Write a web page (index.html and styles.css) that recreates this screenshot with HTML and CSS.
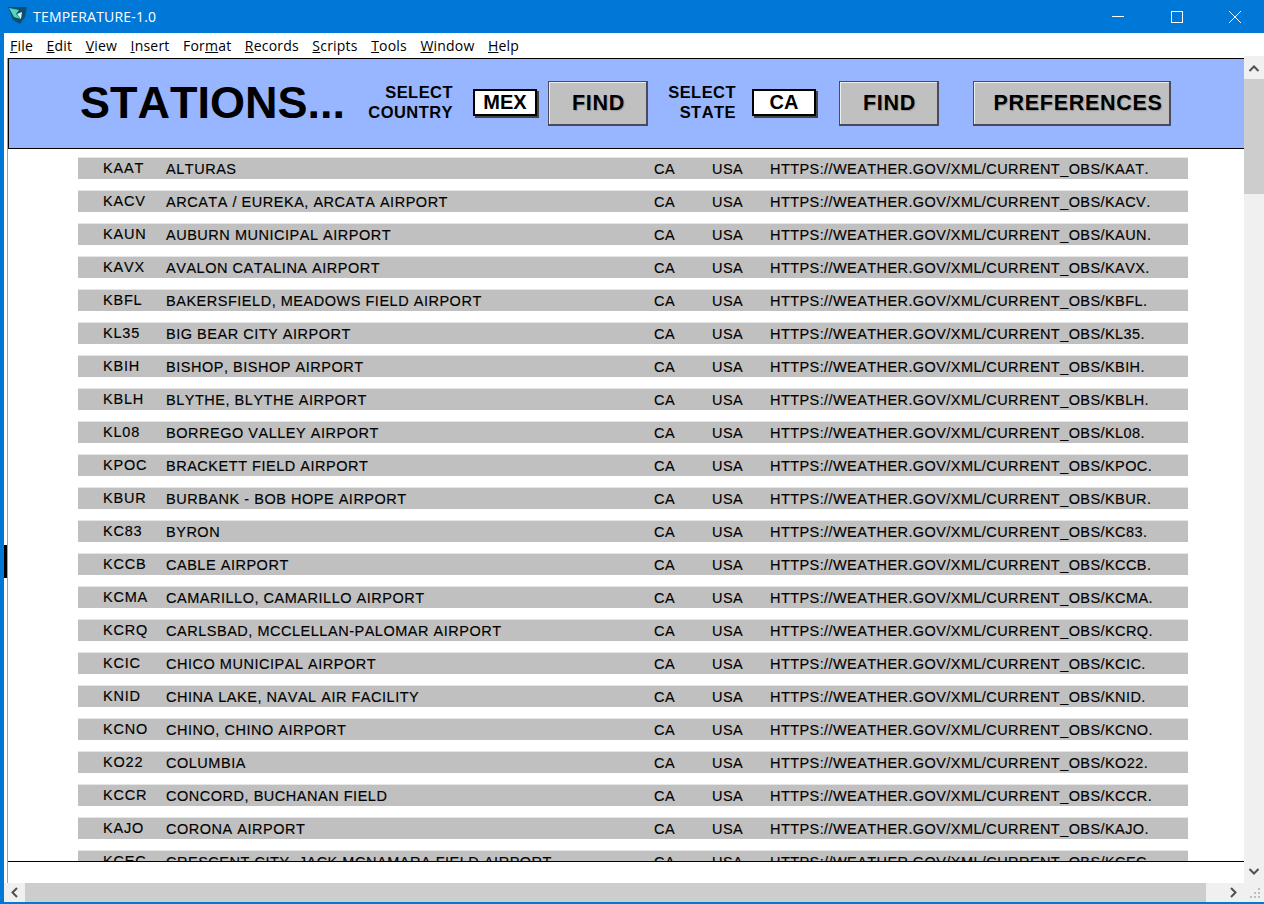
FILE: index.html
```
<!DOCTYPE html>
<html lang="en">
<head>
<meta charset="utf-8">
<title>TEMPERATURE-1.0</title>
<link rel="stylesheet" href="styles.css">
</head>
<body>
<div class="window">
  <header class="titlebar">
    <svg class="app-icon" width="20" height="18" viewBox="0 0 20 18"><path d="M0 0 L19 0 L17 10 L12 17 L5 13 Z" fill="#0d4f6e"/><path d="M1 1 L11 3 L8 7 L13 12 L6 10 Z" fill="#55d6b8"/><path d="M9 7 L14 5 L13 12 Z" fill="#d6f3f0"/></svg>
    <span class="app-title">TEMPERATURE-1.0</span>
    <div class="win-controls">
      <svg width="46" height="32" viewBox="0 0 46 32"><path d="M17 15.5 H29" stroke="#fff" fill="none"/></svg>
      <svg width="46" height="32" viewBox="0 0 46 32"><rect x="17.5" y="10.5" width="11" height="11" stroke="#fff" fill="none"/></svg>
      <svg width="46" height="32" viewBox="0 0 46 32"><path d="M17 10 L29 22 M29 10 L17 22" stroke="#fff" fill="none"/></svg>
    </div>
  </header>
  <nav class="menubar">
    <span><u>F</u>ile</span><span><u>E</u>dit</span><span><u>V</u>iew</span><span><u>I</u>nsert</span><span>For<u>m</u>at</span><span><u>R</u>ecords</span><span><u>S</u>cripts</span><span><u>T</u>ools</span><span><u>W</u>indow</span><span><u>H</u>elp</span>
  </nav>
  <div class="workspace">
    <div class="gutter"><div class="gutter-mark"></div></div>
    <main class="document">
      <section class="toolbar">
        <h1 class="heading">STATIONS...</h1>
        <div class="label label-country">SELECT<br>COUNTRY</div>
        <div class="field field-country">MEX</div>
        <button class="btn btn-find1">FIND</button>
        <div class="label label-state">SELECT<br>STATE</div>
        <div class="field field-state">CA</div>
        <button class="btn btn-find2">FIND</button>
        <button class="btn btn-prefs">PREFERENCES</button>
      </section>
      <section class="list">
        <div class="row"><span class="code">KAAT</span><span class="name">ALTURAS</span><span>CA</span><span>USA</span><span>HTTPS://WEATHER.GOV/XML/CURRENT_OBS/KAAT.</span></div>
        <div class="row"><span class="code">KACV</span><span class="name">ARCATA / EUREKA, ARCATA AIRPORT</span><span>CA</span><span>USA</span><span>HTTPS://WEATHER.GOV/XML/CURRENT_OBS/KACV.</span></div>
        <div class="row"><span class="code">KAUN</span><span class="name">AUBURN MUNICIPAL AIRPORT</span><span>CA</span><span>USA</span><span>HTTPS://WEATHER.GOV/XML/CURRENT_OBS/KAUN.</span></div>
        <div class="row"><span class="code">KAVX</span><span class="name">AVALON CATALINA AIRPORT</span><span>CA</span><span>USA</span><span>HTTPS://WEATHER.GOV/XML/CURRENT_OBS/KAVX.</span></div>
        <div class="row"><span class="code">KBFL</span><span class="name">BAKERSFIELD, MEADOWS FIELD AIRPORT</span><span>CA</span><span>USA</span><span>HTTPS://WEATHER.GOV/XML/CURRENT_OBS/KBFL.</span></div>
        <div class="row"><span class="code">KL35</span><span class="name">BIG BEAR CITY AIRPORT</span><span>CA</span><span>USA</span><span>HTTPS://WEATHER.GOV/XML/CURRENT_OBS/KL35.</span></div>
        <div class="row"><span class="code">KBIH</span><span class="name">BISHOP, BISHOP AIRPORT</span><span>CA</span><span>USA</span><span>HTTPS://WEATHER.GOV/XML/CURRENT_OBS/KBIH.</span></div>
        <div class="row"><span class="code">KBLH</span><span class="name">BLYTHE, BLYTHE AIRPORT</span><span>CA</span><span>USA</span><span>HTTPS://WEATHER.GOV/XML/CURRENT_OBS/KBLH.</span></div>
        <div class="row"><span class="code">KL08</span><span class="name">BORREGO VALLEY AIRPORT</span><span>CA</span><span>USA</span><span>HTTPS://WEATHER.GOV/XML/CURRENT_OBS/KL08.</span></div>
        <div class="row"><span class="code">KPOC</span><span class="name">BRACKETT FIELD AIRPORT</span><span>CA</span><span>USA</span><span>HTTPS://WEATHER.GOV/XML/CURRENT_OBS/KPOC.</span></div>
        <div class="row"><span class="code">KBUR</span><span class="name">BURBANK - BOB HOPE AIRPORT</span><span>CA</span><span>USA</span><span>HTTPS://WEATHER.GOV/XML/CURRENT_OBS/KBUR.</span></div>
        <div class="row"><span class="code">KC83</span><span class="name">BYRON</span><span>CA</span><span>USA</span><span>HTTPS://WEATHER.GOV/XML/CURRENT_OBS/KC83.</span></div>
        <div class="row"><span class="code">KCCB</span><span class="name">CABLE AIRPORT</span><span>CA</span><span>USA</span><span>HTTPS://WEATHER.GOV/XML/CURRENT_OBS/KCCB.</span></div>
        <div class="row"><span class="code">KCMA</span><span class="name">CAMARILLO, CAMARILLO AIRPORT</span><span>CA</span><span>USA</span><span>HTTPS://WEATHER.GOV/XML/CURRENT_OBS/KCMA.</span></div>
        <div class="row"><span class="code">KCRQ</span><span class="name">CARLSBAD, MCCLELLAN-PALOMAR AIRPORT</span><span>CA</span><span>USA</span><span>HTTPS://WEATHER.GOV/XML/CURRENT_OBS/KCRQ.</span></div>
        <div class="row"><span class="code">KCIC</span><span class="name">CHICO MUNICIPAL AIRPORT</span><span>CA</span><span>USA</span><span>HTTPS://WEATHER.GOV/XML/CURRENT_OBS/KCIC.</span></div>
        <div class="row"><span class="code">KNID</span><span class="name">CHINA LAKE, NAVAL AIR FACILITY</span><span>CA</span><span>USA</span><span>HTTPS://WEATHER.GOV/XML/CURRENT_OBS/KNID.</span></div>
        <div class="row"><span class="code">KCNO</span><span class="name">CHINO, CHINO AIRPORT</span><span>CA</span><span>USA</span><span>HTTPS://WEATHER.GOV/XML/CURRENT_OBS/KCNO.</span></div>
        <div class="row"><span class="code">KO22</span><span class="name">COLUMBIA</span><span>CA</span><span>USA</span><span>HTTPS://WEATHER.GOV/XML/CURRENT_OBS/KO22.</span></div>
        <div class="row"><span class="code">KCCR</span><span class="name">CONCORD, BUCHANAN FIELD</span><span>CA</span><span>USA</span><span>HTTPS://WEATHER.GOV/XML/CURRENT_OBS/KCCR.</span></div>
        <div class="row"><span class="code">KAJO</span><span class="name">CORONA AIRPORT</span><span>CA</span><span>USA</span><span>HTTPS://WEATHER.GOV/XML/CURRENT_OBS/KAJO.</span></div>
        <div class="row"><span class="code">KCEC</span><span class="name">CRESCENT CITY, JACK MCNAMARA FIELD AIRPORT</span><span>CA</span><span>USA</span><span>HTTPS://WEATHER.GOV/XML/CURRENT_OBS/KCEC.</span></div>
      </section>
      <div class="doc-foot"></div>
    </main>
    <aside class="vscroll">
      <div class="sb-btn"><svg width="20" height="23" viewBox="0 0 20 23"><path d="M5.5 15 L10 10.5 L14.5 15" stroke="#505050" stroke-width="2" fill="none"/></svg></div>
      <div class="vtrack"><div class="vthumb"></div></div>
      <div class="sb-btn"><svg width="20" height="23" viewBox="0 0 20 23"><path d="M5.5 9 L10 13.5 L14.5 9" stroke="#505050" stroke-width="2" fill="none"/></svg></div>
    </aside>
  </div>
  <div class="hscroll">
    <div class="sb-btn-h"><svg width="21" height="19" viewBox="0 0 21 19"><path d="M13 5 L8.5 9.5 L13 14" stroke="#505050" stroke-width="2" fill="none"/></svg></div>
    <div class="hthumb"></div>
    <div class="sb-btn-h sb-btn-right"><svg width="21" height="19" viewBox="0 0 21 19"><path d="M8 5 L12.5 9.5 L8 14" stroke="#505050" stroke-width="2" fill="none"/></svg></div>
    <div class="grip"><svg width="20" height="19" viewBox="0 0 20 19"><path d="M14 5h2v2h-2zM10 9h2v2h-2zM14 9h2v2h-2zM6 13h2v2H6zM10 13h2v2h-2zM14 13h2v2h-2z" fill="#bdbdbd"/></svg></div>
  </div>
</div>
</body>
</html>
```
FILE: styles.css
```
html, body { margin: 0; padding: 0; height: 100%; overflow: hidden; background: #fff; }
* { box-sizing: border-box; }
.window { width: 1264px; height: 904px; display: flex; flex-direction: column; border-left: 4px solid #0078d7; border-bottom: 2px solid #0078d7; font-family: "Liberation Sans", Arial, sans-serif; font-kerning: none; color: #000; }
.titlebar { margin-left: -4px; height: 33px; flex: none; background: #0078d7; display: flex; align-items: center; padding-left: 8px; color: #fff; }
.app-icon { flex: none; margin-bottom: 1px; }
.app-title { margin-left: 5px; font: 14px "Open Sans", sans-serif; letter-spacing: 0.2px; color: #fff; }
.win-controls { margin-left: auto; display: flex; margin-right: 6px; gap: 12.5px; }
.menubar { height: 25px; flex: none; background: #fff; display: flex; align-items: center; padding-left: 6px; gap: 13.5px; font: 14px "Open Sans", sans-serif; font-kerning: normal; letter-spacing: 0.2px; color: #000; }
.workspace { flex: none; height: 825px; display: flex; }
.gutter { width: 4px; flex: none; border-right: 1px solid #a0a0a0; position: relative; }
.gutter-mark { position: absolute; left: 0; top: 487px; width: 3px; height: 33px; background: #000; }
.document { flex: none; width: 1236px; height: 825px; display: flex; flex-direction: column; overflow: hidden; }
.toolbar { height: 91px; flex: none; background: #98b5ff; border-top: 1px solid #000; border-bottom: 1px solid #000; border-left: 1px solid #000; display: flex; align-items: center; }
.heading { margin: 0 0 2px 71px; width: 278px; flex: none; font-size: 45px; font-weight: 700; line-height: 1; }
.label { font-size: 16.5px; line-height: 20px; font-weight: 700; text-align: right; letter-spacing: 0.45px; flex: none; margin-bottom: 4px; }
.label-country { width: 104px; margin-left: -9px; }
.label-state { width: 68px; margin-left: 20px; }
.field { flex: none; height: 27px; margin-bottom: 2px; background: #fff; border: 2px solid #000; box-shadow: 2px 2px 0 #444; font-size: 20px; font-weight: 700; line-height: 22px; text-align: center; }
.field-country { width: 64px; margin-left: 20px; }
.field-state { width: 64px; margin-left: 16px; }
.btn { flex: none; height: 45px; padding: 0 0 0 2px; background: #c0c0c0; border: 1px solid #4a4a5a; border-right-width: 2px; border-bottom-width: 2px; box-shadow: inset 1px 1px 0 #eee; font-family: inherit; font-size: 21.5px; font-weight: 700; color: #000; letter-spacing: 0.7px; text-shadow: 1px 1px 1px rgba(0,0,0,.2); }
.btn-find1 { width: 100px; margin-left: 11px; }
.btn-find2 { width: 100px; margin-left: 23px; }
.btn-prefs { width: 198px; margin-left: 34px; padding-left: 13px; }
.list { flex: 1 1 auto; min-height: 0; overflow: hidden; padding-top: 8px; display: flex; flex-direction: column; gap: 11px; }
.row { flex: none; margin-left: 70px; width: 1110px; height: 22px; padding-top: 1px; background: #c0c0c0; border-top: 1px solid #e6e6e6; display: grid; grid-template-columns: 63px 488px 58px 58px 1fr; padding-left: 25px; align-items: center; font-size: 14.5px; letter-spacing: 0.42px; line-height: 20px; white-space: nowrap; -webkit-text-stroke: 0.15px #000; }
.code { position: relative; top: -1px; letter-spacing: 0.8px; }
.name { letter-spacing: 0.52px; }
.doc-foot { flex: none; height: 22px; border-top: 1px solid #000; background: #fff; }
.vscroll { flex: none; width: 20px; margin-top: -2px; background: #f0f0f0; display: flex; flex-direction: column; }
.sb-btn { height: 23px; flex: none; }
.sb-btn svg, .sb-btn-h svg, .grip svg { display: block; }
.vtrack { flex: 1; }
.vthumb { height: 115px; background: #cdcdcd; }
.hscroll { flex: none; height: 19px; background: #f0f0f0; display: flex; }
.sb-btn-h { width: 21px; flex: none; }
.sb-btn-right { margin-left: auto; }
.hthumb { width: 1181px; flex: none; background: #cdcdcd; }
.grip { width: 20px; flex: none; }
```
